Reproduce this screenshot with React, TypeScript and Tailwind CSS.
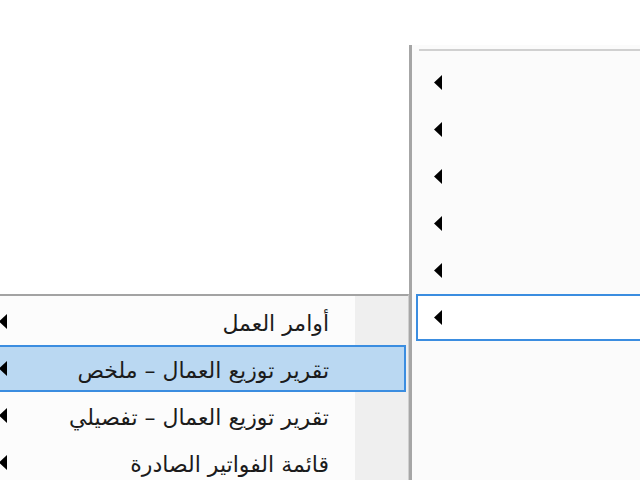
import React from 'react';

const Arrow: React.FC = () => (
    <svg width="8" height="15" viewBox="0 0 8 15" className="shrink-0">
        <polygon points="8,0 8,15 0,7.5" fill="#000" />
    </svg>
);

const subItems = [
    { label: 'أوامر العمل', active: false },
    { label: 'تقرير توزيع العمال – ملخص', active: true },
    { label: 'تقرير توزيع العمال – تفصيلي', active: false },
    { label: 'قائمة الفواتير الصادرة', active: false },
];

const App: React.FC = () => {
    return (
        <div className="w-[640px] h-[480px] bg-white overflow-hidden flex font-['DejaVu_Sans',sans-serif] text-[#1b1b1b]">
            {/* submenu */}
            <div className="w-[409px] shrink-0 flex flex-col">
                <div className="h-[294px] shrink-0" />
                <div className="-ml-[22px] flex-1 bg-[linear-gradient(to_left,#efefef_53px,#fcfcfc_53px)] border-t-2 border-r border-t-[#a3a3a3] border-r-[#cfcfcf] pt-[2px] px-[2px]">
                    {subItems.map((item, i) => (
                        <div
                            key={i}
                            className={
                                item.active
                                    ? 'h-[47px] flex items-center border-2 border-[#3b8de0] bg-[#bad8f2]'
                                    : 'h-[47px] flex items-center border-2 border-transparent'
                            }
                        >
                            <div className="ml-[17px]">
                                <Arrow />
                            </div>
                            <div className="flex-1" />
                            <span dir="rtl" className="text-[22px] leading-none pt-[5px] pr-[75px] whitespace-nowrap">
                                {item.label}
                            </span>
                        </div>
                    ))}
                </div>
            </div>

            {/* divider between menus */}
            <div className="w-[3px] mt-[45px] bg-[#a6a6a6] shrink-0" />

            {/* parent menu */}
            <div className="flex-1 mt-[45px] bg-[#fbfbfb] pt-[4px]">
                <div className="ml-[7px] h-[2px] bg-[#d0d0d0]" />
                <div className="pt-[8px] pl-[4px]">
                    {[0, 1, 2, 3, 4, 5].map((i) => (
                        <div
                            key={i}
                            className={
                                i === 5
                                    ? 'h-[47px] flex items-center border-2 border-r-0 border-[#3b8de0] bg-white'
                                    : 'h-[47px] flex items-center border-2 border-transparent'
                            }
                        >
                            <div className="ml-[16px]">
                                <Arrow />
                            </div>
                        </div>
                    ))}
                </div>
            </div>
        </div>
    );
};

export default App;
